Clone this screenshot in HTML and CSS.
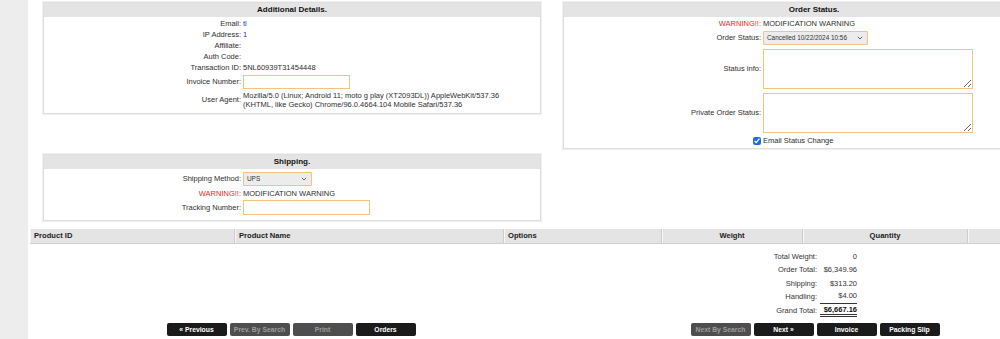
FILE: index.html
```html
<!DOCTYPE html>
<html>
<head>
<meta charset="utf-8">
<link rel="stylesheet" href="styles.css">
</head>
<body>
<div class="layout">
  <div class="sidebar"></div>
  <div class="main">
    <div class="top">
      <div class="col-left">
        <div class="box box-details">
          <div class="box-head">Additional Details.</div>
          <div class="rows">
            <div class="lbl">Email:</div><div class="val"><a class="lnk">tl</a></div>
            <div class="lbl">IP Address:</div><div class="val"><a class="lnk">1</a></div>
            <div class="lbl">Affiliate:</div><div class="val"></div>
            <div class="lbl">Auth Code:</div><div class="val"></div>
            <div class="lbl">Transaction ID:</div><div class="val">5NL60939T31454448</div>
            <div class="lbl mid">Invoice Number:</div><div class="val"><input class="inp inp-invoice" type="text"></div>
            <div class="lbl mid">User Agent:</div><div class="val ua">Mozilla/5.0 (Linux; Android 11; moto g play (XT2093DL)) AppleWebKit/537.36<br>(KHTML, like Gecko) Chrome/96.0.4664.104 Mobile Safari/537.36</div>
          </div>
        </div>
        <div class="box box-ship">
          <div class="box-head">Shipping.</div>
          <div class="rows">
            <div class="lbl mid">Shipping Method:</div>
            <div class="val"><div class="sel sel-ship"><span>UPS</span><svg class="chev" width="6" height="4" viewBox="0 0 6 4"><path d="M0.8 0.8 L3 3 L5.2 0.8" fill="none" stroke="#555" stroke-width="0.9"/></svg></div></div>
            <div class="lbl warn">WARNING!!:</div><div class="val">MODIFICATION WARNING</div>
            <div class="lbl mid">Tracking Number:</div><div class="val"><input class="inp inp-track" type="text"></div>
          </div>
        </div>
      </div>
      <div class="col-right">
        <div class="box box-status">
          <div class="box-head">Order Status.</div>
          <div class="rows">
            <div class="lbl warn">WARNING!!:</div><div class="val">MODIFICATION WARNING</div>
            <div class="lbl mid">Order Status:</div>
            <div class="val"><div class="sel sel-status"><span>Cancelled 10/22/2024 10:56</span><svg class="chev" width="6" height="4" viewBox="0 0 6 4"><path d="M0.8 0.8 L3 3 L5.2 0.8" fill="none" stroke="#555" stroke-width="0.9"/></svg></div></div>
            <div class="lbl mid">Status info:</div><div class="val"><textarea class="ta"></textarea></div>
            <div class="lbl mid">Private Order Status:</div><div class="val"><textarea class="ta"></textarea></div>
            <div class="lbl chk-cell"><input class="chk" type="checkbox" checked></div><div class="val">Email Status Change</div>
          </div>
        </div>
      </div>
    </div>

    <div class="prod-head">
      <div class="ph c1">Product ID</div>
      <div class="ph c2">Product Name</div>
      <div class="ph c3">Options</div>
      <div class="ph c4 ctr">Weight</div>
      <div class="ph c5 ctr">Quantity</div>
      <div class="ph c6"></div>
    </div>

    <div class="totals">
      <div class="tl">Total Weight:</div><div class="tv">0</div>
      <div class="tl">Order Total:</div><div class="tv">$6,349.96</div>
      <div class="tl">Shipping:</div><div class="tv">$313.20</div>
      <div class="tl">Handling:</div><div class="tv under">$4.00</div>
      <div class="tl">Grand Total:</div><div class="tv grand">$6,667.16</div>
    </div>

    <div class="nav">
      <div class="nav-half">
        <div class="btn">« Previous</div>
        <div class="btn off">Prev. By Search</div>
        <div class="btn off">Print</div>
        <div class="btn">Orders</div>
      </div>
      <div class="nav-half">
        <div class="btn off">Next By Search</div>
        <div class="btn">Next »</div>
        <div class="btn">Invoice</div>
        <div class="btn">Packing Slip</div>
      </div>
    </div>
  </div>
</div>
</body>
</html>
```

FILE: styles.css
```css
html, body {
  margin: 0;
  padding: 0;
  background: #fff;
  overflow: hidden;
}
body {
  font-family: "Liberation Sans", Arial, sans-serif;
  font-size: 7.5px;
  color: #2e2e2e;
}
.layout {
  display: flex;
  width: 1100px;
  height: 339px;
}
.sidebar {
  width: 28px;
  flex: 0 0 28px;
  background: #ededed;
}
.main {
  flex: 0 0 1072px;
  background: #fff;
}
.top {
  display: flex;
  align-items: flex-start;
  padding-top: 2px;
}
.col-left {
  width: 526px;
  flex: 0 0 526px;
}
.col-right {
  flex: 0 0 auto;
}
.box {
  border: 1px solid #dedede;
  box-shadow: 0 0 0 1px #f1f1f1;
  background: #fff;
  box-sizing: border-box;
}
.box-details {
  margin-left: 15px;
  width: 498px;
  padding-bottom: 4px;
}
.box-ship {
  margin-left: 15px;
  width: 498px;
  margin-top: 40px;
  padding-bottom: 3px;
}
.box-status {
  margin-left: 9px;
  width: 502px;
  padding-bottom: 2px;
}
.box-head {
  background: #e4e4e4;
  text-align: center;
  font-weight: bold;
  font-size: 8px;
  height: 14px;
  line-height: 14px;
  color: #111;
}
.rows {
  display: grid;
  grid-template-columns: 197px 1fr;
  column-gap: 2px;
  padding-top: 0.5px;
}
.lbl {
  text-align: right;
  line-height: 11px;
  white-space: nowrap;
}
.lbl.mid {
  display: flex;
  align-items: center;
  justify-content: flex-end;
}
.val {
  line-height: 11px;
  white-space: nowrap;
  display: flex;
  align-items: center;
}
.val.ua {
  display: block;
  line-height: 8.5px;
  padding: 1.5px 0 0;
}
.lnk {
  color: #2b2bd6;
}
.warn {
  color: #f02828;
}
.inp {
  box-sizing: border-box;
  height: 14px;
  margin: 2px 0;
  border: 1px solid #f4c47c;
  background: #fff;
  padding: 0;
  outline: none;
}
.inp-invoice { width: 107px; }
.inp-track { width: 127px; height: 15px; margin: 1px 0 2px; }
.sel {
  position: relative;
  box-sizing: border-box;
  height: 14px;
  margin: 2px 0;
  border: 1px solid #f4c47c;
  background: #ececec;
  border-radius: 1px;
  font-size: 6.4px;
  line-height: 12px;
  padding-left: 3px;
  color: #333;
}
.sel-ship { width: 69px; }
.sel-status { width: 105px; }
.chev {
  position: absolute;
  right: 4px;
  top: 4px;
}
.ta {
  box-sizing: border-box;
  width: 210px;
  height: 40px;
  margin: 2px 0 2px;
  border: 1px solid #f4c47c;
  background: #fff;
  padding: 0;
  outline: none;
  display: block;
}
.chk-cell {
  display: flex;
  align-items: center;
  justify-content: flex-end;
  padding-top: 1px;
}
.chk {
  width: 8px;
  height: 8px;
  margin: 0;
  accent-color: #1a6fe8;
}
.prod-head {
  display: flex;
  margin-left: 2px;
  margin-top: 8px;
  height: 15px;
  background: #e4e4e4;
  border-bottom: 1px solid #cfcfcf;
  box-sizing: border-box;
}
.ph {
  font-weight: bold;
  font-size: 7.6px;
  line-height: 14px;
  color: #222;
  padding-left: 4px;
  box-sizing: border-box;
  border-right: 1px solid #cdcdcd;
  box-shadow: inset 1px 0 0 #f6f6f6;
}
.ph.ctr { text-align: center; padding-left: 0; }
.c1 { width: 205px; }
.c2 { width: 269px; }
.c3 { width: 158px; }
.c4 { width: 141px; }
.c5 { width: 165px; }
.c6 { flex: 1; border-right: none; }
.totals {
  display: grid;
  grid-template-columns: 117px 37px;
  column-gap: 3px;
  grid-auto-rows: 13.5px;
  margin-left: 672px;
  margin-top: 6px;
  width: 157px;
}
.tl {
  text-align: right;
  line-height: 13.5px;
  color: #333;
}
.tv {
  text-align: right;
  line-height: 13.5px;
  color: #333;
}
.tv.under {
  border-bottom: 1px solid #333;
  line-height: 12.5px;
}
.tv.grand {
  font-weight: bold;
  color: #111;
  border-bottom: 3px double #333;
  line-height: 12px;
}
.nav {
  display: flex;
  margin-left: 1px;
  margin-top: 6px;
}
.nav-half {
  width: 524px;
  display: flex;
  justify-content: center;
  gap: 3px;
}
.btn {
  width: 60px;
  height: 13px;
  box-sizing: border-box;
  background: #1b1b1b;
  border-radius: 2px;
  color: #fff;
  font-weight: bold;
  font-size: 6.8px;
  line-height: 13px;
  text-align: center;
  white-space: nowrap;
}
.btn.off {
  background: #4e4e4e;
  color: #9c9c9c;
}
```
